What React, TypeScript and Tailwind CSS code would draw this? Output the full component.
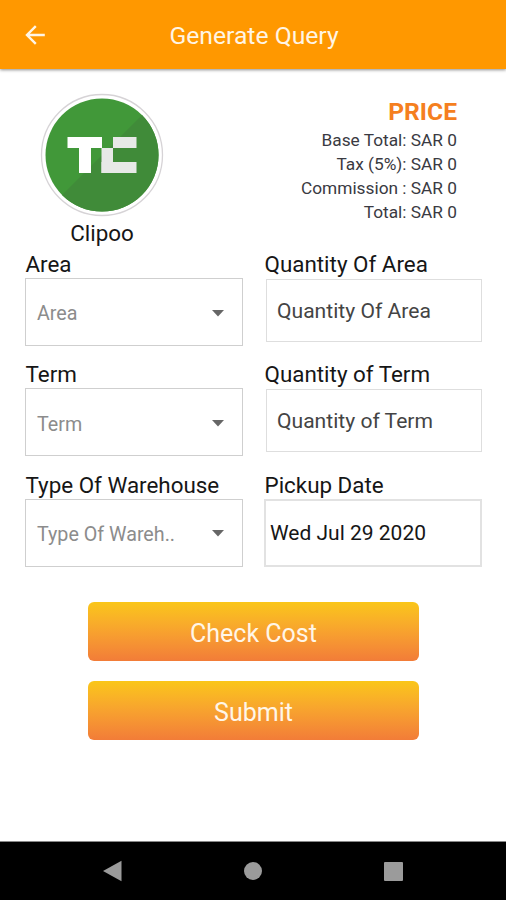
import type { ReactNode } from "react";

type Line = { label: string; amount: number };

const priceLines: Line[] = [
  { label: "Base Total:", amount: 0 },
  { label: "Tax (5%):", amount: 0 },
  { label: "Commission :", amount: 0 },
  { label: "Total:", amount: 0 },
];

const BackArrow = () => (
  <svg width="20" height="20" viewBox="0 0 20 20" fill="none" stroke="#fff5e5" strokeWidth="2.4">
    <path d="M19.8 10H2M10.8 1.2 2 10l8.8 8.8" />
  </svg>
);

const ClipooLogo = () => (
  <svg width="124" height="124" viewBox="0 0 124 124">
    <circle cx="62" cy="62" r="60.5" fill="#fff" stroke="#d6d3d6" strokeWidth="1.3" />
    <circle cx="62" cy="62" r="56.5" fill="#419839" />
    <path d="M102 22A56.5 56.5 0 0 1 22 102Z" fill="#408b39" />
    <g fill="#fff">
      <rect x="27.5" y="44" width="34.5" height="11" />
      <rect x="39" y="44" width="12" height="36" />
    </g>
    <g fill="#e7e9e7">
      <rect x="73" y="44" width="23.5" height="11" />
      <rect x="61.5" y="55" width="11.5" height="25" />
      <rect x="61.5" y="69" width="35" height="11" />
    </g>
  </svg>
);

const Field = ({ label, children }: { label: string; children: ReactNode }) => (
  <div className="h-[110.4px]">
    <p className="h-[28px] text-[22.4px] leading-[28px] whitespace-nowrap text-[#161616] nth-[1]:pl-[0.5px]">{label}</p>
    {children}
  </div>
);

const Select = ({ placeholder }: { placeholder: string }) => (
  <button className="flex h-[68px] w-[218px] items-center justify-between border-[1.5px] border-[#cfcfcf] pr-[18px] pl-[11px] text-[19.7px] text-[#8c8c8c]">
    <span className="pt-[4px]">{placeholder}</span>
    <svg className="mt-[2px]" width="12" height="7" viewBox="0 0 12 7" fill="#666">
      <path d="M0 0h12L6 6.5Z" />
    </svg>
  </button>
);

const Input = ({ value }: { value: string }) => (
  <div className="mt-[1px] ml-[2px] flex h-[63px] w-[216px] items-center border border-[#dedede] pl-[10px] text-[21.1px] whitespace-nowrap text-[#444]">
    {value}
  </div>
);

const ActionButton = ({ children }: { children: ReactNode }) => (
  <button className="flex h-[59px] w-[331px] items-center justify-center rounded-[6px] bg-linear-to-b from-[#fac618] to-[#f27c38] pt-[4px] text-[25px] text-[#fff6e8]">
    {children}
  </button>
);

const App = () => {
  return (
    <div className="flex h-[900px] w-[506px] flex-col overflow-hidden bg-white font-[Roboto,sans-serif]">
      <header className="z-10 grid h-[69px] shrink-0 grid-cols-[80px_1fr_80px] items-center bg-[#ff9800] shadow-[0_1px_3px_rgba(0,0,0,0.45)]">
        <div className="pl-[25px]">
          <BackArrow />
        </div>
        <h1 className="pt-[2px] pl-[2px] text-center text-[24.7px] leading-[30px] text-[#fff5e5]">Generate Query</h1>
      </header>

      <main className="flex flex-1 flex-col">
        <section className="flex h-[181px] shrink-0 justify-between pt-[24px] pr-[49px] pl-[40px]">
          <div className="flex flex-col items-center">
            <ClipooLogo />
            <p className="text-[22.4px] leading-[32px] text-[#161616]">Clipoo</p>
          </div>
          <div className="pt-[4px] text-right">
            <h2 className="mb-px text-[24.6px] leading-[30px] font-bold text-[#f57f20]">PRICE</h2>
            {priceLines.map((line) => (
              <p key={line.label} className="text-[17.3px] leading-[24px] text-[#3a3a42]">
                {line.label} SAR {line.amount}
              </p>
            ))}
          </div>
        </section>

        <section className="grid shrink-0 grid-cols-[218px_218px] gap-x-[21px] pl-[25px]">
          <Field label="Area">
            <Select placeholder="Area" />
          </Field>
          <Field label="Quantity Of Area">
            <Input value="Quantity Of Area" />
          </Field>
          <Field label="Term">
            <Select placeholder="Term" />
          </Field>
          <Field label="Quantity of Term">
            <Input value="Quantity of Term" />
          </Field>
          <Field label="Type Of Warehouse">
            <Select placeholder="Type Of Wareh.." />
          </Field>
          <Field label="Pickup Date">
            <div className="flex h-[68px] w-[218px] items-center border-2 border-[#e2e2e2] pt-[2px] pl-[4px] text-[21px] text-[#161616]">
              Wed Jul 29 2020
            </div>
          </Field>
        </section>

        <section className="mt-[21px] flex flex-col items-center gap-[20px] pl-px">
          <ActionButton>Check Cost</ActionButton>
          <ActionButton>Submit</ActionButton>
        </section>
      </main>

      {/* Android navigation bar */}
      <nav className="flex h-[59px] shrink-0 items-center justify-between border-t border-[#888] bg-black pr-[103px] pl-[103px]">
        <svg width="19" height="22" viewBox="0 0 19 22" fill="#9b9b9b">
          <path d="M0 11 18.5 0.8v20.4Z" />
        </svg>
        <div className="size-[18px] rounded-full bg-[#9b9b9b]" />
        <div className="size-[19px] rounded-[1px] bg-[#9b9b9b]" />
      </nav>
    </div>
  );
};

export default App;
